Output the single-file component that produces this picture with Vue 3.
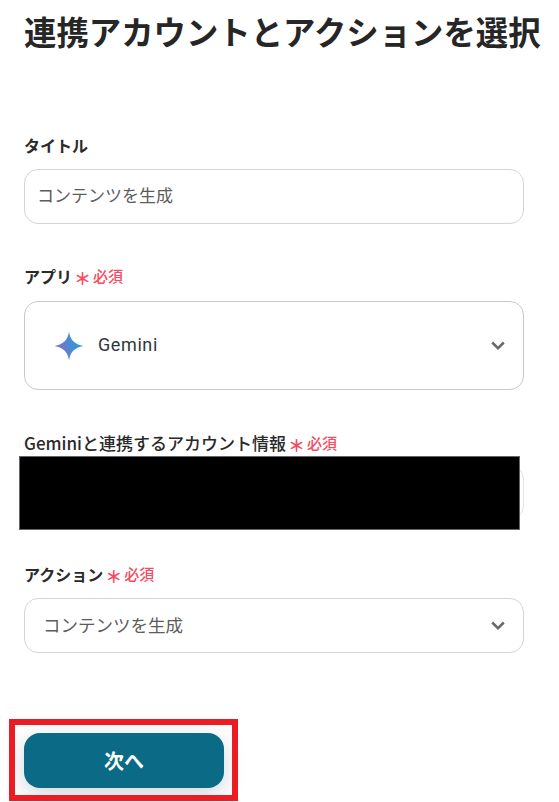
<template>
  <div class="page">
    <h1 class="heading">連携アカウントとアクションを選択</h1>

    <div class="field first">
      <label class="label">タイトル</label>
      <div class="box text-box">コンテンツを生成</div>
    </div>

    <div class="field app">
      <label class="label">アプリ<span class="star">＊</span><span class="req">必須</span></label>
      <div class="box app-box">
        <svg class="logo" width="30" height="30" viewBox="0 0 30 30">
          <defs>
            <linearGradient id="gem" x1="0" y1="0.6" x2="1" y2="0.4">
              <stop offset="0" stop-color="#9168c0" />
              <stop offset="0.45" stop-color="#5684d1" />
              <stop offset="1" stop-color="#1ba1e3" />
            </linearGradient>
          </defs>
          <path d="M15 0.5C16 8.5 20.5 13.5 29.5 15C20.5 16.5 16 21.5 15 29.5C14 21.5 9.500 16.5 0.5 15C9.500 13.500 14 8.500 15 0.500Z" fill="url(#gem)" />
        </svg>
        <span class="app-name">Gemini</span>
        <svg class="chev" width="14" height="9" viewBox="0 0 14 9"><path d="M1.2 1.5L7 7.200L12.800 1.500" fill="none" stroke="#6a6a6a" stroke-width="2.500" /></svg>
      </div>
    </div>

    <div class="field account">
      <label class="label wide">Geminiと連携するアカウント情報<span class="star">＊</span><span class="req">必須</span></label>
      <div class="box account-box">
        <div class="redact"></div>
      </div>
    </div>

    <div class="field action">
      <label class="label">アクション<span class="star">＊</span><span class="req">必須</span></label>
      <div class="box select-box">
        <span>コンテンツを生成</span>
        <svg class="chev" width="14" height="9" viewBox="0 0 14 9"><path d="M1.2 1.5L7 7.200L12.800 1.500" fill="none" stroke="#6a6a6a" stroke-width="2.500" /></svg>
      </div>
    </div>

    <div class="footer">
      <button class="next">次へ</button>
      <div class="mark"></div>
    </div>
  </div>
</template>

<script setup>
</script>

<style>
html,
body {
  margin: 0;
  background: #fff;
}
</style>

<style scoped>
.page {
  width: 559px;
  height: 802px;
  overflow: hidden;
  box-sizing: border-box;
  padding: 0 35px 0 24px;
  font-family: "Noto Sans CJK JP", "Noto Sans", sans-serif;
  color: #2a2a2a;
}

.heading {
  margin: 0;
  height: 64px;
  line-height: 62px;
  font-size: 32.4px;
  font-weight: 700;
  white-space: nowrap;
  color: #262626;
}

.field {
  display: flex;
  flex-direction: column;
}

.first {
  margin-top: 68px;
}

.app {
  margin-top: 39px;
}

.account {
  margin-top: 40px;
}

.action {
  margin-top: 41px;
}

.label {
  display: flex;
  align-items: center;
  height: 26px;
  font-size: 16px;
  font-weight: 700;
  line-height: 26px;
  white-space: nowrap;
}

.wide {
  font-size: 17px;
  font-weight: 500;
}

.star {
  margin-left: 2px;
  width: 17px;
  text-align: center;
  font-size: 17px;
  font-weight: 700;
  color: #f9495f;
  line-height: 26px;
  position: relative;
  top: 2px;
}

.req {
  margin-left: 2px;
  font-size: 15px;
  font-weight: 500;
  color: #f9495f;
}

.box {
  box-sizing: border-box;
  width: 500px;
  border: 1px solid #d3d5da;
  border-radius: 14px;
  background: #fff;
  font-size: 17px;
  color: #5c5c5c;
  display: flex;
  align-items: center;
}

.text-box {
  height: 55px;
  margin-top: 11px;
  padding: 0 0 5px 12px;
}

.app-box {
  height: 89px;
  margin-top: 12px;
  padding: 0 18px 0 29px;
  border-color: #c9c9c9;
}

.logo {
  flex: none;
}

.app-name {
  margin: 0 0 2px 14px;
  font-size: 18px;
  color: #2f3640;
  letter-spacing: 0.6px;
  font-family: "Roboto", sans-serif;
}

.chev {
  margin-left: auto;
  flex: none;
}

.account-box {
  position: relative;
  height: 55px;
  margin-top: 9px;
  border-color: #e2e2e2;
}

.redact {
  position: absolute;
  left: -6px;
  width: 501px;
  top: -10px;
  height: 74px;
  box-sizing: border-box;
  border: 1px solid #666;
  background: #000;
}

.select-box {
  height: 55px;
  margin-top: 11px;
  padding: 0 18px 0 18px;
  font-size: 17.5px;
}

.select-box span {
  margin-bottom: 2px;
}

.footer {
  position: relative;
  margin-top: 80px;
  width: 200px;
}

.next {
  display: block;
  width: 200px;
  height: 55px;
  border: 0;
  border-radius: 16px;
  background: #0b6a85;
  color: #fff;
  font-family: inherit;
  font-size: 20px;
  font-weight: 700;
  box-shadow: 0 6px 22px rgba(40, 70, 90, 0.22);
}

.mark {
  position: absolute;
  left: -15px;
  top: -14px;
  width: 229px;
  height: 82px;
  box-sizing: border-box;
  border: 6px solid #ec1c24;
}
</style>
